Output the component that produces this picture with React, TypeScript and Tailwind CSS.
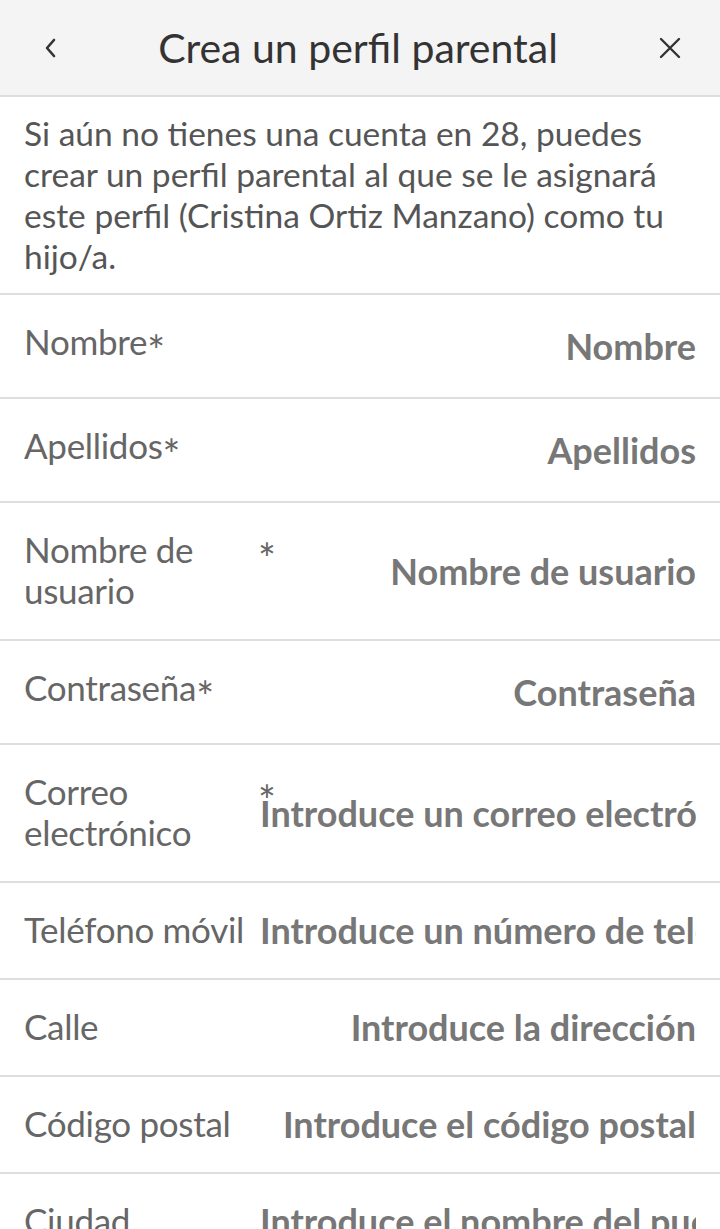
import React from "react";

type Field = {
    label: string;
    placeholder: string;
    required?: boolean;
    twoLine?: boolean;
};

const fields: Field[] = [
    { label: "Nombre", placeholder: "Nombre", required: true },
    { label: "Apellidos", placeholder: "Apellidos", required: true },
    { label: "Nombre de usuario", placeholder: "Nombre de usuario", required: true, twoLine: true },
    { label: "Contraseña", placeholder: "Contraseña", required: true },
    { label: "Correo electrónico", placeholder: "Introduce un correo electrónico", required: true, twoLine: true },
    { label: "Teléfono móvil", placeholder: "Introduce un número de teléfono" },
    { label: "Calle", placeholder: "Introduce la dirección" },
    { label: "Código postal", placeholder: "Introduce el código postal" },
    { label: "Ciudad", placeholder: "Introduce el nombre del pueblo o ciudad" },
];

const Row = ({ field }: { field: Field }) => {
    const rowH = field.twoLine ? "min-h-[138px]" : field.required ? "min-h-[104px]" : "min-h-[97px]";
    return (
        <div className={`flex items-stretch border-b-2 border-[#dedede] pl-6 pr-6 ${rowH}`}>
            <div className="w-[248px] mr-[-12px] shrink-0 flex items-start pt-[26px] pb-[27px] text-[35px] leading-[41px] tracking-[-0.3px] text-[#666]">
                <span className="min-w-0">{field.label}</span>
                {field.required && (
                    <span className="shrink-0 w-[14px] relative top-[9px] text-[42px] leading-[41px] text-[#666]">*</span>
                )}
            </div>
            <div className="flex-1 min-w-0 flex items-center justify-end-safe overflow-hidden">
                <span className="whitespace-nowrap text-[36px] font-bold leading-[41px] text-[#777]">
                    {field.placeholder}
                </span>
            </div>
        </div>
    );
};

const App = () => {
    return (
        <div className="w-[720px] h-[1229px] overflow-hidden bg-white" style={{ fontFamily: "Lato, 'Open Sans', sans-serif" }}>
            <header className="h-[97px] bg-[#f4f4f4] border-b-2 border-[#dedede] flex items-center justify-between pl-[43px] pr-[39px]">
                <button className="w-[14px] h-10 flex items-center justify-center">
                    <svg width="14" height="22" viewBox="0 0 14 22" fill="none">
                        <path d="M11 3 L4 11 L11 19" stroke="#333" strokeWidth="2.6" strokeLinecap="round" strokeLinejoin="round" />
                    </svg>
                </button>
                <h1 className="text-[41px] font-normal text-[#333] leading-none">Crea un perfil parental</h1>
                <button className="w-[22px] h-10 flex items-center justify-center">
                    <svg width="22" height="22" viewBox="0 0 22 22" fill="none">
                        <path d="M2 2 L20 20 M20 2 L2 20" stroke="#333" strokeWidth="2.4" strokeLinecap="round" />
                    </svg>
                </button>
            </header>
            <p className="px-6 py-4 text-[33.5px] leading-[41px] text-[#555] border-b-2 border-[#dedede]">
                Si aún no tienes una cuenta en 28, puedes crear un perfil parental al que se le asignará este perfil (Cristina Ortiz Manzano) como tu hijo/a.
            </p>
            <div>
                {fields.map((f) => (
                    <Row key={f.label} field={f} />
                ))}
            </div>
        </div>
    );
};

export default App;
